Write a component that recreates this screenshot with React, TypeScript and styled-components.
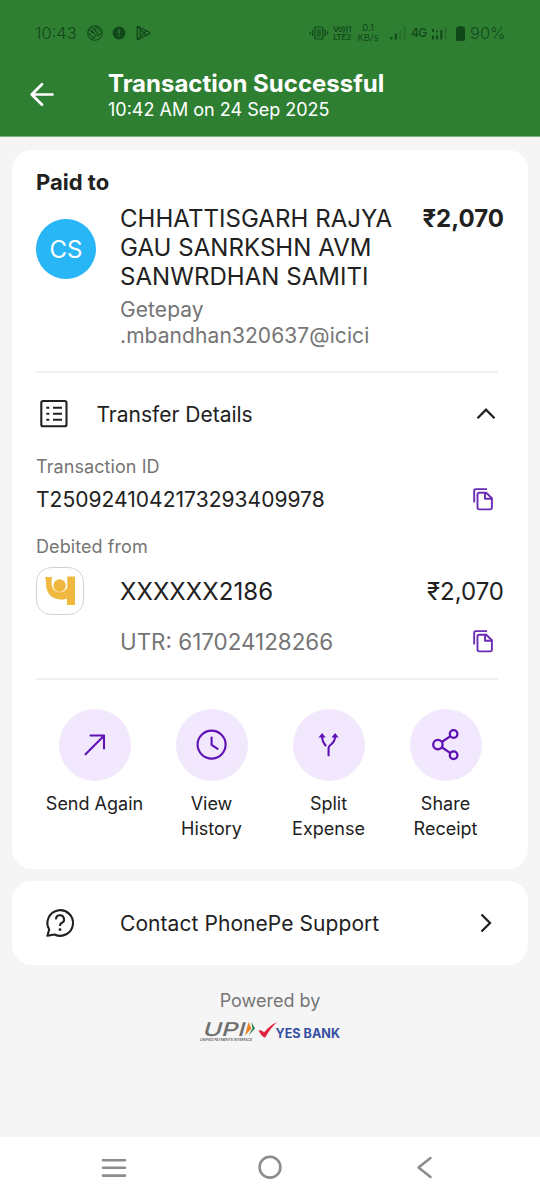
import React from 'react';
import styled, { createGlobalStyle } from 'styled-components';

const GlobalStyle = createGlobalStyle`
  * { box-sizing: border-box; }
  body {
    margin: 0;
    background: #f5f5f5;
    font-family: Inter, Roboto, 'Liberation Sans', sans-serif;
    color: #212121;
  }
  svg { display: block; flex: none; overflow: visible; }
`;

const Screen = styled.div`
  width: 540px;
  height: 1196px;
  display: flex;
  flex-direction: column;
  overflow: hidden;
`;

const Header = styled.header`
  height: 137px;
  background: #2f7f33;
  border-bottom: 1px solid #7dab7f;
`;

const StatusBar = styled.div`
  height: 66px;
  display: flex;
  align-items: center;
  justify-content: space-between;
  padding: 0 35px 0 35px;
  color: #11481a;
`;

const StatusGroup = styled.div`
  display: flex;
  align-items: center;
`;

const StatusText = styled.span<{ $size: number; $width: number; $spacing?: number; $weight?: number }>`
  width: ${p => p.$width}px;
  font-size: ${p => p.$size}px;
  line-height: 20px;
  font-weight: ${p => p.$weight ?? 300};
  letter-spacing: ${p => p.$spacing ?? 0}px;
  white-space: nowrap;
`;

const StatusStack = styled.div<{ $size: number; $line: number; $weight: number; $width: number; $spacing?: number }>`
  width: ${p => p.$width}px;
  display: flex;
  flex-direction: column;
  align-items: center;
  font-size: ${p => p.$size}px;
  line-height: ${p => p.$line}px;
  font-weight: ${p => p.$weight};
  letter-spacing: ${p => p.$spacing ?? 0}px;
  white-space: nowrap;
`;

const Gap = styled.span<{ $w: number }>`
  width: ${p => p.$w}px;
`;

const TitleBar = styled.div`
  display: flex;
  align-items: flex-start;
  padding: 3px 30px 0;
  gap: 54px;
  color: #fff;
`;

const BackButton = styled.div`
  padding-top: 14px;
`;

const Title = styled.h1`
  margin: 0;
  padding-top: 1px;
  font-size: 24px;
  line-height: 28px;
  font-weight: 700;
`;

const Subtitle = styled.div`
  font-size: 18px;
  line-height: 24px;
`;

const Main = styled.main`
  flex: 1;
  display: flex;
  flex-direction: column;
  gap: 12px;
  padding: 13px 12px 0;
`;

const Card = styled.section`
  background: #fff;
  border-radius: 20px;
  padding: 0 24px;
`;

const ReceiptCard = styled(Card)`
  height: 719px;
  padding-top: 18px;
`;

const SectionTitle = styled.h2`
  margin: 0;
  font-size: 22px;
  line-height: 28px;
  font-weight: 700;
`;

const PayeeRow = styled.div`
  display: flex;
  align-items: flex-start;
  margin-top: 8px;
  height: 167px;
`;

const Avatar = styled.div`
  width: 60px;
  height: 60px;
  margin: 15px 24px 0 0;
  border-radius: 50%;
  background: #29b6f6;
  color: #fff;
  display: flex;
  align-items: center;
  justify-content: center;
  font-size: 24px;
`;

const Payee = styled.div`
  flex: 1;
`;

const PayeeName = styled.div`
  font-size: 24px;
  line-height: 29px;
  white-space: nowrap;
  letter-spacing: 0.05px;
`;

const PayeeVpa = styled.div`
  margin-top: 6px;
  font-size: 21px;
  line-height: 25.5px;
  color: #757575;
  letter-spacing: 0.08px;
`;

const Amount = styled.div<{ $bold?: boolean }>`
  font-size: 24px;
  line-height: 29px;
  font-weight: ${p => (p.$bold ? 700 : 400)};
  white-space: nowrap;
`;

const Divider = styled.hr`
  margin: 0 6px 0 0;
  border: 0;
  height: 2px;
  background: #f0f0f0;
`;

const DetailsHeader = styled.div`
  display: flex;
  align-items: center;
  height: 82px;
  padding: 0 8px 0 4px;
`;

const DetailsTitle = styled.div`
  flex: 1;
  margin-left: 28.5px;
  padding-top: 2px;
  font-size: 21px;
  line-height: 28px;
`;

const FieldLabel = styled.div`
  height: 24px;
  line-height: 24px;
  font-size: 18px;
  color: #757575;
  letter-spacing: 0.08px;
`;

const DebitedLabel = styled(FieldLabel)`
  height: 47px;
  padding-top: 15px;
`;

const FieldRow = styled.div<{ $h: number; $indent?: number; $right?: number }>`
  display: flex;
  align-items: center;
  justify-content: space-between;
  height: ${p => p.$h}px;
  padding-left: ${p => p.$indent ?? 0}px;
  padding-right: ${p => p.$right ?? 0}px;
`;

const TransactionId = styled.div`
  font-size: 21px;
  letter-spacing: 0.03px;
`;

const BankBadge = styled.div`
  width: 48px;
  height: 48px;
  margin-right: 36px;
  border: 1px solid #d2d2d2;
  border-radius: 15px;
  display: flex;
  align-items: center;
  justify-content: center;
`;

const AccountNumber = styled.div`
  flex: 1;
  font-size: 24px;
  letter-spacing: 0.08px;
`;

const UtrRow = styled(FieldRow)`
  margin-bottom: 11px;
`;

const Utr = styled.div`
  font-size: 22.4px;
  color: #757575;
`;

const Actions = styled.div`
  display: grid;
  grid-template-columns: repeat(4, 1fr);
  padding-top: 28.5px;
`;

const Action = styled.div`
  display: flex;
  flex-direction: column;
  align-items: center;
`;

const ActionCircle = styled.div`
  width: 72px;
  height: 72px;
  border-radius: 50%;
  background: #f2e8fd;
  display: flex;
  align-items: center;
  justify-content: center;
  color: #5f11b5;
`;

const ActionLabel = styled.div`
  margin-top: 11.5px;
  font-size: 18px;
  line-height: 24.5px;
  text-align: center;
  white-space: pre-line;
`;

const SupportCard = styled(Card)`
  height: 84px;
  display: flex;
  align-items: center;
  padding: 0 36px 0 34px;
`;

const SupportLabel = styled.div`
  flex: 1;
  margin-left: 46px;
  padding-top: 1px;
  font-size: 21px;
  letter-spacing: 0.07px;
`;

const Footer = styled.footer`
  display: flex;
  flex-direction: column;
  align-items: center;
  gap: 8px;
  padding-top: 12px;
  font-size: 18px;
  line-height: 24px;
  color: #757575;
`;

const NavBar = styled.nav`
  height: 59px;
  background: #fff;
  display: flex;
  align-items: center;
  padding: 2px 0 0 101px;
`;

const CopyIcon = () => (
  <svg width="21" height="23" viewBox="0 0 21 23" fill="none" stroke="#6a2bb5" strokeWidth="1.9" strokeLinejoin="round">
    <path d="M1.2 14.5V2.8Q1.2 1.1 2.9 1.1H14" />
    <path d="M6.3 4.7H13.2L18.9 10.3V19.6Q18.9 21.4 17.1 21.4H6.3Q4.5 21.4 4.5 19.6V6.5Q4.5 4.7 6.3 4.7Z" />
    <path d="M12 5V10.8H18.6" />
  </svg>
);

const ListIcon = () => (
  <svg width="28" height="28" viewBox="0 0 28 28" fill="none" stroke="#212121" strokeWidth="2.1">
    <rect x="1.3" y="1" width="25.2" height="25.2" rx="1.8" />
    <path d="M6.3 7.7h3M6.3 13.7h3M6.3 19.7h3M13 7.7h9M13 13.7h9M13 19.7h9" />
  </svg>
);

const actions = [
  {
    label: 'Send Again',
    icon: (
      <svg width="30" height="30" viewBox="0 0 30 30" fill="none" stroke="currentColor" strokeWidth="2.1" strokeLinecap="round" strokeLinejoin="round">
        <path d="M5.5 24.3L24 5.8M10.5 5.5H24V18.5" />
      </svg>
    ),
  },
  {
    label: 'View\nHistory',
    icon: (
      <svg width="30" height="30" viewBox="0 0 30 30" fill="none" stroke="currentColor" strokeWidth="2.1" strokeLinecap="round" strokeLinejoin="round">
        <circle cx="14.6" cy="14.6" r="14" />
        <path d="M14.6 7.6V14.9L20.6 18.8" />
      </svg>
    ),
  },
  {
    label: 'Split\nExpense',
    icon: (
      <svg width="30" height="30" viewBox="0 0 30 30" fill="none" stroke="currentColor" strokeWidth="2.1">
        <path d="M14.6 26.3V17.8Q14.6 16.4 15.9 15.5Q21.1 11.8 21.1 6.3" />
        <path d="M12.2 16Q8.1 12.3 8.1 6.3" />
        <path d="M4.5 7.6L8.1 3.1L11.7 7.6ZM17.5 7.6L21.1 3.1L24.7 7.6Z" fill="currentColor" stroke="none" />
      </svg>
    ),
  },
  {
    label: 'Share\nReceipt',
    icon: (
      <svg width="30" height="30" viewBox="0 0 30 30" fill="none" stroke="currentColor" strokeWidth="2.3">
        <circle cx="6.9" cy="14.6" r="4.7" />
        <circle cx="22.6" cy="4" r="3.8" />
        <circle cx="22.6" cy="25.2" r="3.8" />
        <path d="M10.8 12L19.5 6.1M10.8 17.2L19.5 23.1" />
      </svg>
    ),
  },
];

export default function App() {
  return (
    <Screen>
      <GlobalStyle />
      <Header>
        <StatusBar>
          <StatusGroup>
            <StatusText $size={16.5} $width={41}>10:43</StatusText>
            <Gap $w={11} />
            <svg width="16" height="16" viewBox="0 0 16 16" fill="none" stroke="currentColor" strokeWidth="1.1">
              <circle cx="8" cy="8" r="7.3" />
              <path d="M2.3 4.5L5.8 8.4M4.8 2.1L10.8 8.2L5.8 13.3M8.5 1.2L13.6 6.4M1.8 8.2L7.5 13.8M7 5L9 3M8 9L4 5M10.5 11.3L14 8" />
            </svg>
            <Gap $w={9} />
            <svg width="14" height="14" viewBox="0 0 14 14">
              <circle cx="7" cy="7" r="6.5" fill="currentColor" />
              <path d="M7 3.2V7.7M7 9V10.5" stroke="#2f7f33" strokeWidth="1.3" />
            </svg>
            <Gap $w={10} />
            <svg width="15" height="16" viewBox="0 0 15 16" fill="none" stroke="currentColor" strokeWidth="1.3" strokeLinejoin="round">
              <path d="M1.2 2.1Q1.2 .8 2.5 1.5L13.3 7.2Q14.5 8 13.3 8.8L2.5 14.5Q1.2 15.2 1.2 13.9Z" />
              <path d="M1.8 2L10.5 10.2M1.8 14L10.5 5.8M4 5.5V10.5" />
            </svg>
          </StatusGroup>
          <StatusGroup>
            <svg width="20" height="14" viewBox="0 0 20 14" fill="none" stroke="currentColor" strokeWidth="1.2">
              <rect x="5" y="1" width="8" height="12" rx="1" />
              <rect x="6.8" y="3" width="4.4" height="8" fill="currentColor" opacity=".55" stroke="none" />
              <path d="M2.7 3.8V10.2M15.3 3.8V10.2M.4 5.5V8.5M17.6 5.5V8.5" />
            </svg>
            <Gap $w={2} />
            <StatusStack $size={8} $line={8} $weight={600} $width={20} $spacing={-0.3}>
              <span>Vo))1</span>
              <span>LTE2</span>
            </StatusStack>
            <Gap $w={5} />
            <StatusStack $size={9.5} $line={10.5} $weight={400} $width={22}>
              <span>0.1</span>
              <span>KB/s</span>
            </StatusStack>
            <Gap $w={11} />
            <svg width="16" height="14" viewBox="0 0 16 14" fill="none" stroke="currentColor" strokeWidth="2">
              <path d="M1.5 11V13.4M5.8 7.5V13.4" />
              <path d="M10.3 4V13.4M14.6 .8V13.4" opacity=".3" />
            </svg>
            <Gap $w={5} />
            <StatusText $size={12} $width={16} $weight={500} $spacing={-0.6}>4G</StatusText>
            <Gap $w={4} />
            <svg width="16" height="14" viewBox="0 0 16 14" fill="none" stroke="currentColor" strokeWidth="2">
              <path d="M2 3V6M2 9.5V13.4M6 9.5V13.4M6 4.5V6.5M10.3 4V13.4" />
              <path d="M14.6 .8V13.4" opacity=".3" />
            </svg>
            <Gap $w={9} />
            <svg width="9" height="15" viewBox="0 0 9 15">
              <path d="M2.5 0H6.5V1H7.5Q9 1 9 2.5V13.5Q9 15 7.5 15H1.5Q0 15 0 13.5V2.5Q0 1 1.5 1H2.5Z" fill="currentColor" />
            </svg>
            <Gap $w={5} />
            <StatusText $size={16.5} $width={35}>90%</StatusText>
          </StatusGroup>
        </StatusBar>
        <TitleBar>
          <BackButton>
            <svg width="24" height="24" viewBox="0 0 24 24" fill="none" stroke="#fff" strokeWidth="2.7" strokeLinecap="round" strokeLinejoin="round">
              <path d="M22.5 11.5H2M12 1.2L1.7 11.5L12 21.8" />
            </svg>
          </BackButton>
          <div>
            <Title>Transaction Successful</Title>
            <Subtitle>10:42 AM on 24 Sep 2025</Subtitle>
          </div>
        </TitleBar>
      </Header>

      <Main>
        <ReceiptCard>
          <SectionTitle>Paid to</SectionTitle>
          <PayeeRow>
            <Avatar>CS</Avatar>
            <Payee>
              <PayeeName>
                CHHATTISGARH RAJYA<br />GAU SANRKSHN AVM<br />SANWRDHAN SAMITI
              </PayeeName>
              <PayeeVpa>
                Getepay<br />.mbandhan320637@icici
              </PayeeVpa>
            </Payee>
            <Amount $bold>₹2,070</Amount>
          </PayeeRow>
          <Divider />
          <DetailsHeader>
            <ListIcon />
            <DetailsTitle>Transfer Details</DetailsTitle>
            <svg width="20" height="12" viewBox="0 0 20 12" fill="none" stroke="#212121" strokeWidth="2.3">
              <path d="M1.5 10.2L10 1.7L18.5 10.2" />
            </svg>
          </DetailsHeader>
          <FieldLabel>Transaction ID</FieldLabel>
          <FieldRow $h={41} $right={10}>
            <TransactionId>T2509241042173293409978</TransactionId>
            <CopyIcon />
          </FieldRow>
          <DebitedLabel>Debited from</DebitedLabel>
          <FieldRow $h={48}>
            <BankBadge>
              <svg width="32" height="32" viewBox="0 0 32 32" fill="#efb93f">
                <path d="M1 2H8.2Q7.5 5 7.5 8.5A8.3 8.3 0 0 0 23.3 12.5V1.5H31V30H23V23.5Q20 25 16 24.5Q2 23 2 8Q2 4 1 2Z" />
                <circle cx="15.6" cy="10.6" r="6.3" />
              </svg>
            </BankBadge>
            <AccountNumber>XXXXXX2186</AccountNumber>
            <Amount>₹2,070</Amount>
          </FieldRow>
          <UtrRow $h={52} $indent={84} $right={10}>
            <Utr>UTR: 617024128266</Utr>
            <CopyIcon />
          </UtrRow>
          <Divider />
          <Actions>
            {actions.map(a => (
              <Action key={a.label}>
                <ActionCircle>{a.icon}</ActionCircle>
                <ActionLabel>{a.label}</ActionLabel>
              </Action>
            ))}
          </Actions>
        </ReceiptCard>

        <SupportCard>
          <svg width="28" height="28" viewBox="0 0 28 28" fill="none" stroke="#212121" strokeWidth="2.1" strokeLinejoin="round">
            <path d="M3.2 20.5A12.8 12.8 0 1 1 8.6 25.5L1.4 26.8Z" />
            <path d="M10 10.4A4 4 0 1 1 15.5 14Q14 14.8 14 17" />
            <circle cx="14" cy="20.6" r="1.4" fill="#212121" stroke="none" />
          </svg>
          <SupportLabel>Contact PhonePe Support</SupportLabel>
          <svg width="12" height="20" viewBox="0 0 12 20" fill="none" stroke="#212121" strokeWidth="2.3">
            <path d="M1.5 1.5L10 10L1.5 18.5" />
          </svg>
        </SupportCard>

        <Footer>
          Powered by
          <svg width="140" height="22" viewBox="0 0 140 22">
            <g transform="translate(2 14.5) skewX(-16)">
              <text x="0" y="0" fontSize="19" fontFamily="Inter" fontWeight="500" fill="#6f6f70" textLength="42" lengthAdjust="spacingAndGlyphs">UPI</text>
            </g>
            <path d="M48.5 1L51.5 7.5L45 14.5Z" fill="#ef8122" />
            <path d="M51.3 1L55 7.5L48.5 14.5L52.5 7.5Z" fill="#27804b" />
            <text x="0" y="19.5" fontSize="4" fontFamily="Inter" fontStyle="italic" fontWeight="600" fill="#666" textLength="52" lengthAdjust="spacingAndGlyphs">UNIFIED PAYMENTS INTERFACE</text>
            <path d="M58.5 9.5Q61.5 8.5 64 11.5Q69.5 4.5 77 1.3Q70 7.5 65.3 16.5Q62.5 16.8 58.5 9.5Z" fill="#e3213f" />
            <text x="75.5" y="16.7" fontSize="13" fontFamily="Inter" fontWeight="700" fill="#3650a3" textLength="64.5" lengthAdjust="spacingAndGlyphs">YES BANK</text>
          </svg>
        </Footer>
      </Main>

      <NavBar>
        <svg width="26" height="20" viewBox="0 0 26 20" stroke="#8c8c8c" strokeWidth="2.6" strokeLinecap="round">
          <path d="M2 2.2H24M2 9.8H24M2 17.6H24" />
        </svg>
        <Gap $w={131} />
        <svg width="24" height="24" viewBox="0 0 24 24" fill="none" stroke="#8c8c8c" strokeWidth="2.6">
          <circle cx="12" cy="11.2" r="10.4" />
        </svg>
        <Gap $w={135} />
        <svg width="16" height="22" viewBox="0 0 16 22" fill="none" stroke="#8c8c8c" strokeWidth="2.5" strokeLinecap="round" strokeLinejoin="round">
          <path d="M13.5 1L1.5 10.5L13.5 20" />
        </svg>
      </NavBar>
    </Screen>
  );
}
